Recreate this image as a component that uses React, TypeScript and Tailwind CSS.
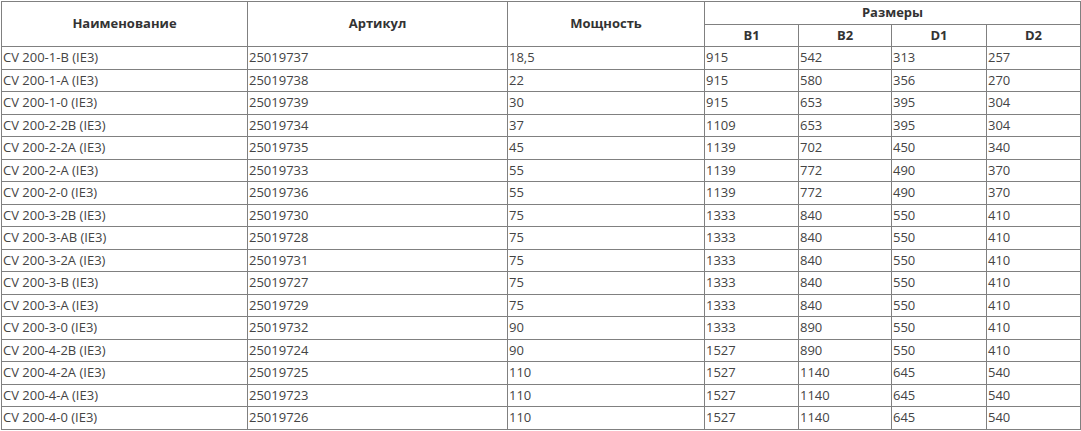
import React from "react";

const rows: string[][] = [
  ["CV 200-1-B (IE3)", "25019737", "18,5", "915", "542", "313", "257"],
  ["CV 200-1-A (IE3)", "25019738", "22", "915", "580", "356", "270"],
  ["CV 200-1-0 (IE3)", "25019739", "30", "915", "653", "395", "304"],
  ["CV 200-2-2B (IE3)", "25019734", "37", "1109", "653", "395", "304"],
  ["CV 200-2-2A (IE3)", "25019735", "45", "1139", "702", "450", "340"],
  ["CV 200-2-A (IE3)", "25019733", "55", "1139", "772", "490", "370"],
  ["CV 200-2-0 (IE3)", "25019736", "55", "1139", "772", "490", "370"],
  ["CV 200-3-2B (IE3)", "25019730", "75", "1333", "840", "550", "410"],
  ["CV 200-3-AB (IE3)", "25019728", "75", "1333", "840", "550", "410"],
  ["CV 200-3-2A (IE3)", "25019731", "75", "1333", "840", "550", "410"],
  ["CV 200-3-B (IE3)", "25019727", "75", "1333", "840", "550", "410"],
  ["CV 200-3-A (IE3)", "25019729", "75", "1333", "840", "550", "410"],
  ["CV 200-3-0 (IE3)", "25019732", "90", "1333", "890", "550", "410"],
  ["CV 200-4-2B (IE3)", "25019724", "90", "1527", "890", "550", "410"],
  ["CV 200-4-2A (IE3)", "25019725", "110", "1527", "1140", "645", "540"],
  ["CV 200-4-A (IE3)", "25019723", "110", "1527", "1140", "645", "540"],
  ["CV 200-4-0 (IE3)", "25019726", "110", "1527", "1140", "645", "540"],
];

const th = "border border-[#808080] text-center font-bold text-[#333] leading-[21.5px] p-0";
const td = "border border-[#808080] text-left leading-[21.5px] py-0 pl-[1px] pr-0 whitespace-nowrap";

export default function App() {
  return (
    <div className="w-[1081px] h-[431px] bg-white pl-[1px] pt-[1px]" style={{ fontFamily: '"Open Sans", sans-serif' }}>
      <table className="table-fixed border-collapse w-[1079px] text-[13px] text-[#444]">
        <colgroup>
          <col className="w-[246px]" />
          <col className="w-[260px]" />
          <col className="w-[197px]" />
          <col className="w-[94px]" />
          <col className="w-[93px]" />
          <col className="w-[95px]" />
          <col className="w-[94px]" />
        </colgroup>
        <thead>
          <tr>
            <th rowSpan={2} className={th}>Наименование</th>
            <th rowSpan={2} className={th}>Артикул</th>
            <th rowSpan={2} className={th}>Мощность</th>
            <th colSpan={4} className={th}>Размеры</th>
          </tr>
          <tr>
            <th className={th}>B1</th>
            <th className={th}>B2</th>
            <th className={th}>D1</th>
            <th className={th}>D2</th>
          </tr>
        </thead>
        <tbody>
          {rows.map((r, i) => (
            <tr key={i}>
              {r.map((c, j) => (
                <td key={j} className={td}>{c}</td>
              ))}
            </tr>
          ))}
        </tbody>
      </table>
    </div>
  );
}
